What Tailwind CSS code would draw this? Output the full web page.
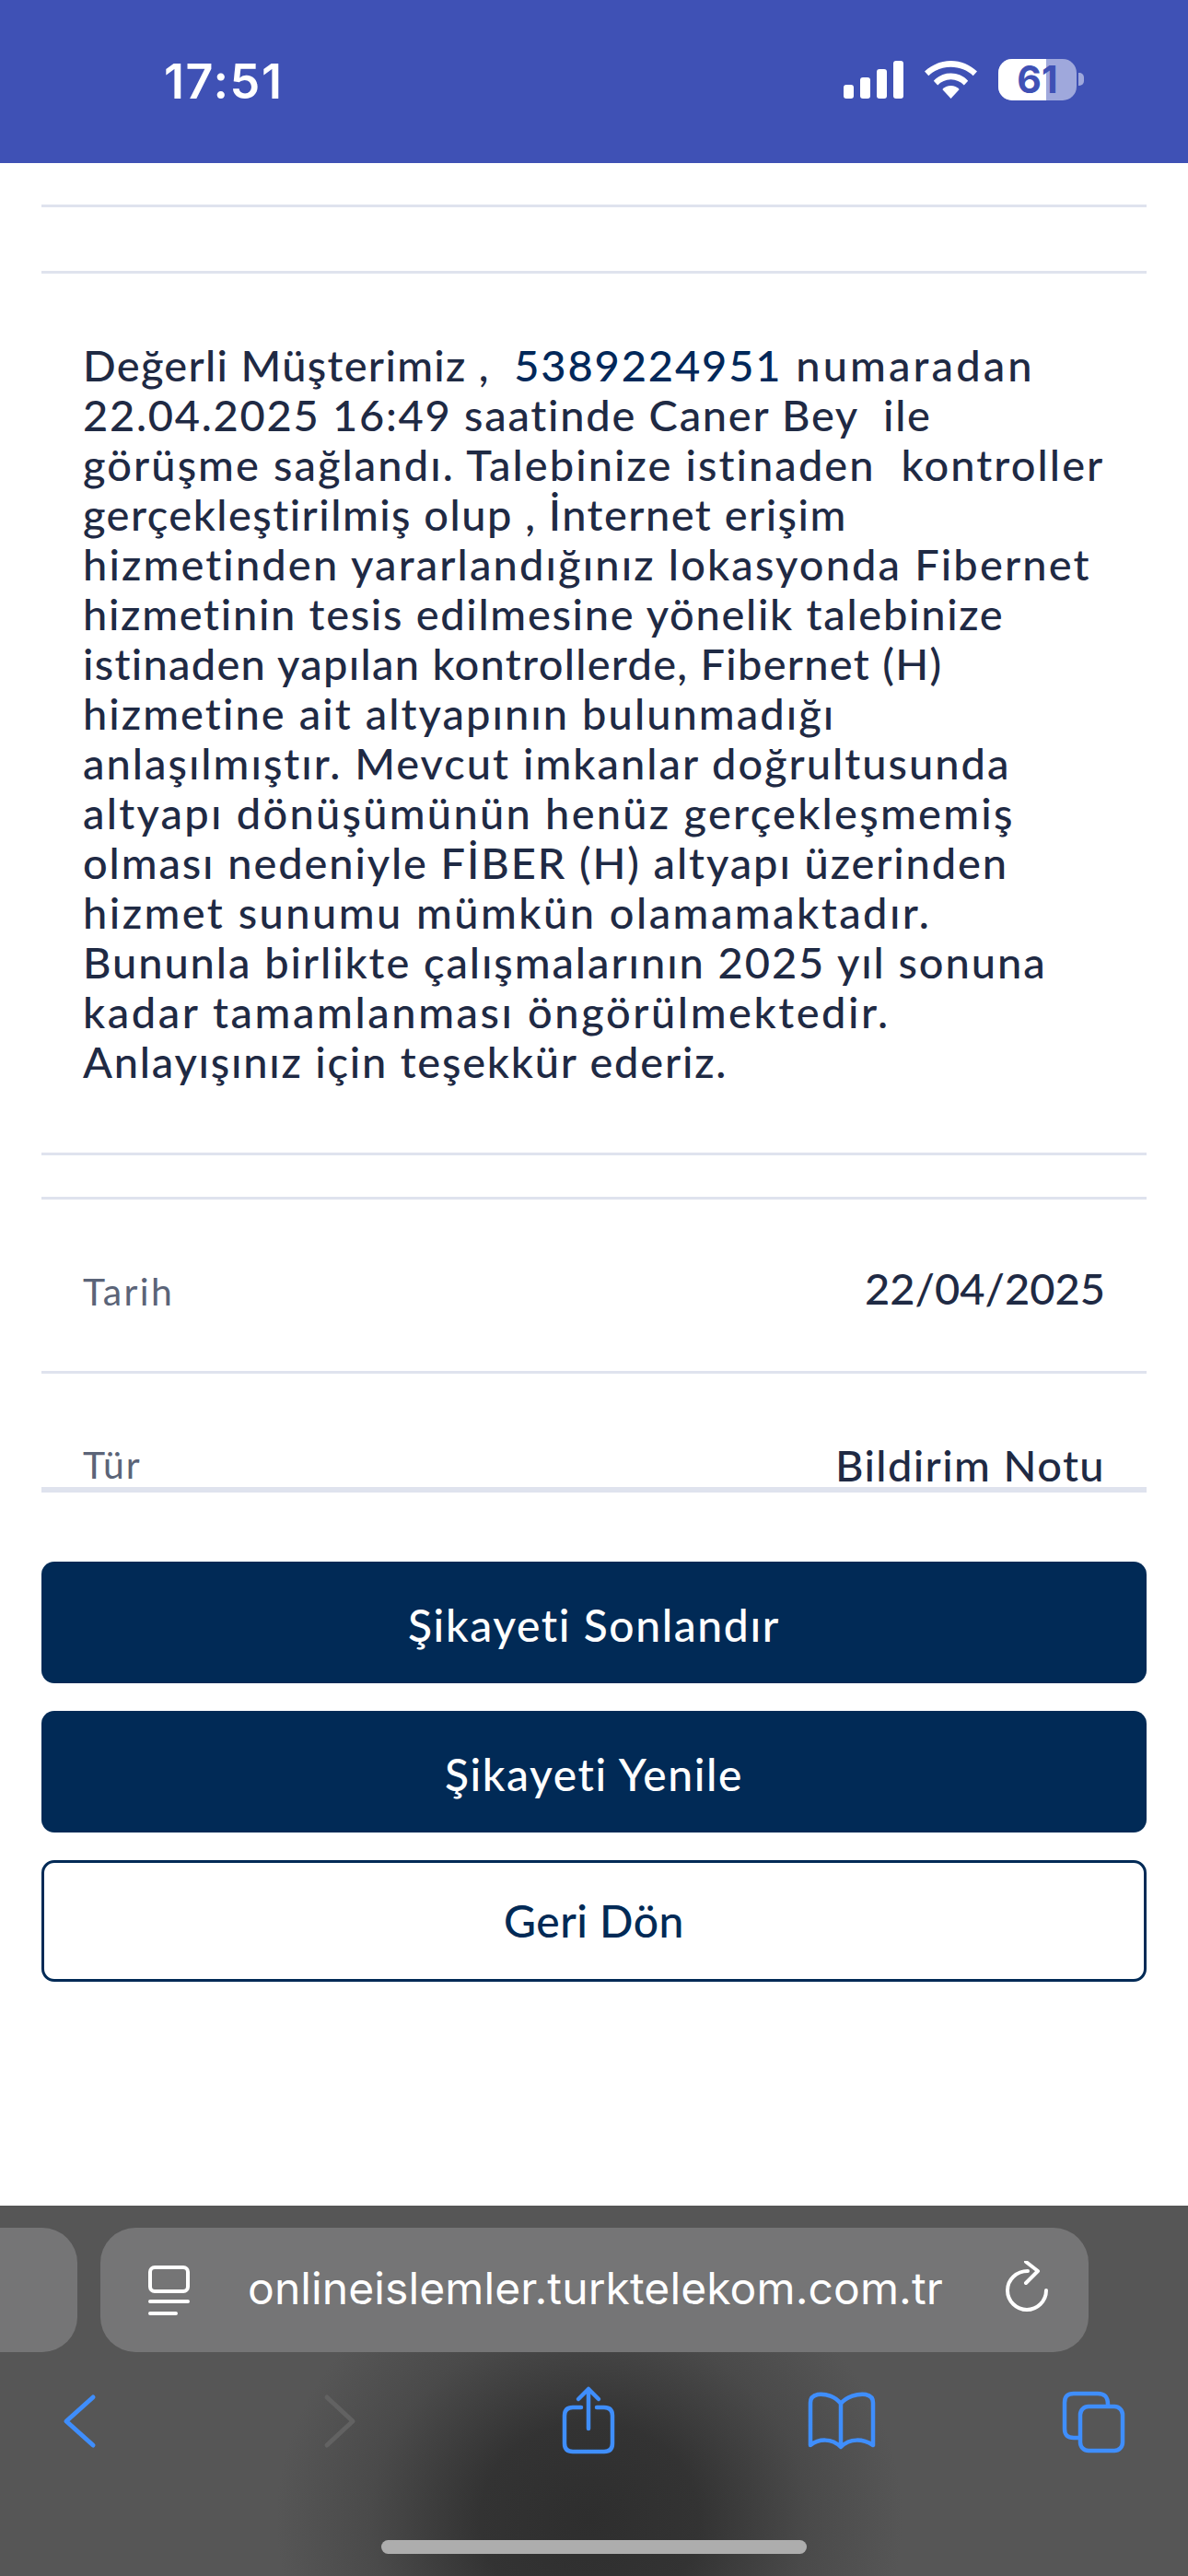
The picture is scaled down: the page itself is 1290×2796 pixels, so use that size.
<!DOCTYPE html>
<html>
<head>
<meta charset="utf-8">
<script src="https://cdn.jsdelivr.net/npm/@tailwindcss/browser@4"></script>
</head>
<body class="m-0 bg-white">
<div class="relative w-[1290px] h-[2796px] overflow-hidden bg-white font-['Lato',sans-serif]">
  <header class="relative h-[177px] bg-[#3f51b5] text-white">
    <div class="absolute left-[178px] top-[59px] font-['Inter',sans-serif] font-semibold text-[52px] leading-[60px] tracking-[1.6px]">17:51</div>
    <svg class="absolute left-[916px] top-[66px]" width="65" height="41" viewBox="0 0 65 41" fill="#fff">
      <rect x="0" y="26" width="11" height="15" rx="3"/><rect x="18" y="18" width="11" height="23" rx="3"/><rect x="36" y="9" width="11" height="32" rx="3"/><rect x="54" y="0" width="11" height="41" rx="3"/>
    </svg>
    <svg class="absolute left-[1004px] top-[66px]" width="57" height="41" viewBox="0 0 57 41" fill="#fff">
      <path d="M28.5 0C17.5 0 7.8 4.3 0 11.5L4.3 16.3C10.6 10.2 19 6.8 28.5 6.8S46.4 10.2 52.7 16.3L57 11.5C49.2 4.3 39.5 0 28.5 0Z"/>
      <path d="M28.5 13.5C21.3 13.5 14.8 16.2 9.8 21.7L14.2 26.4C18 22.6 23 20.3 28.5 20.3S39 22.6 42.8 26.4L47.2 21.7C42.2 16.2 35.7 13.5 28.5 13.5Z"/>
      <path d="M28.5 27C24.9 27 21.7 28.4 19.3 31L28.5 41L37.7 31C35.3 28.4 32.1 27 28.5 27Z"/>
    </svg>
    <div class="absolute left-[1084px] top-[64px] w-[85px] h-[45px] rounded-[15px] bg-[#9fa8dc] overflow-hidden">
      <div class="h-full w-[52px] bg-white"></div>
    </div>
    <div class="absolute left-[1171px] top-[79px] w-[6px] h-[14px] rounded-r-[5px] bg-[#9fa8dc]"></div>
    <div class="absolute left-[1084px] top-[64px] w-[85px] h-[45px] flex items-center justify-center font-['Inter',sans-serif] font-bold text-[41px] leading-[45px] text-[#3f51b5]">61</div>
  </header>

  <main class="px-[45px]">
    <div class="h-[45px]"></div>
    <div class="h-[3px] bg-[#dfe3ee]"></div>
    <div class="h-[69px]"></div>
    <div class="h-[3px] bg-[#dfe3ee]"></div>
    <div class="pl-[45px] pt-[72px] text-[47px] leading-[54px] font-medium text-[#1f2a44] h-[954px] [&>p]:whitespace-pre">
      <p><span class="tracking-[1.3px]">Değerli Müşterimiz ,  </span><span class="tracking-[1.85px] text-[#00285a]">5389224951</span><span class="tracking-[3.1px]"> numaradan</span></p>
      <p class="tracking-[1.72px]">22.04.2025 16:49 saatinde Caner Bey  ile</p>
      <p class="tracking-[2.06px]">görüşme sağlandı. Talebinize istinaden  kontroller</p>
      <p class="tracking-[1.46px]">gerçekleştirilmiş olup , İnternet erişim</p>
      <p class="tracking-[2.12px]">hizmetinden yararlandığınız lokasyonda Fibernet</p>
      <p class="tracking-[1.69px]">hizmetinin tesis edilmesine yönelik talebinize</p>
      <p class="tracking-[1.27px]">istinaden yapılan kontrollerde, Fibernet (H)</p>
      <p class="tracking-[2.05px]">hizmetine ait altyapının bulunmadığı</p>
      <p class="tracking-[2px]">anlaşılmıştır. Mevcut imkanlar doğrultusunda</p>
      <p class="tracking-[2.25px]">altyapı dönüşümünün henüz gerçekleşmemiş</p>
      <p class="tracking-[1.88px]">olması nedeniyle FİBER (H) altyapı üzerinden</p>
      <p class="tracking-[2.45px]">hizmet sunumu mümkün olamamaktadır.</p>
      <p class="tracking-[1.92px]">Bununla birlikte çalışmalarının 2025 yıl sonuna</p>
      <p class="tracking-[2.56px]">kadar tamamlanması öngörülmektedir.</p>
      <p class="tracking-[1.77px]">Anlayışınız için teşekkür ederiz.</p>
    </div>
    <div class="h-[3px] bg-[#dfe3ee]"></div>
    <div class="h-[45px]"></div>
    <div class="h-[3px] bg-[#dfe3ee]"></div>
    <div class="flex items-center justify-between h-[186px] px-[45px]">
      <span class="pt-[13px] text-[41px] tracking-[2.3px] text-[#5b6478]">Tarih</span>
      <span class="pt-[6px] text-[47px] font-medium text-[#1f2a44]">22/04/2025</span>
    </div>
    <div class="h-[3px] bg-[#dfe3ee]"></div>
    <div class="h-[129px] overflow-hidden border-b-[6px] border-[#dfe3ee] flex justify-between items-start px-[45px] pt-[75px]">
      <span class="text-[41px] leading-[48px] tracking-[2px] text-[#5b6478]">Tür</span>
      <span class="text-[47px] leading-[48px] font-medium tracking-[1.4px] text-[#1f2a44]">Bildirim Notu</span>
    </div>
    <div class="mt-[75px] flex flex-col gap-[30px]">
      <button class="h-[132px] pt-[6px] rounded-[14px] bg-[#012a56] text-white text-[48px] tracking-[1.6px] font-medium">Şikayeti Sonlandır</button>
      <button class="h-[132px] pt-[6px] rounded-[14px] bg-[#012a56] text-white text-[48px] tracking-[1.6px] font-medium">Şikayeti Yenile</button>
      <button class="h-[132px] rounded-[14px] border-[3px] border-[#012a56] bg-white text-[#012a56] text-[48px] tracking-[0.5px] font-medium">Geri Dön</button>
    </div>
  </main>

  <footer class="absolute left-0 top-[2394px] w-[1290px] h-[402px] bg-[radial-gradient(ellipse_340px_300px_at_640px_340px,#2e2e2e_0%,#333333_35%,#4a4a4a_70%,#565656_100%)]">
    <div class="absolute left-[-40px] top-[24px] w-[124px] h-[135px] rounded-[38px] bg-[#757576]"></div>
    <div class="absolute left-[109px] top-[24px] w-[1073px] h-[135px] rounded-[38px] bg-[#757576] text-white">
      <svg class="absolute left-[52px] top-[41px]" width="45" height="58" viewBox="0 0 45 58" fill="none" stroke="#fff" stroke-width="4" stroke-linecap="round">
        <rect x="2" y="2" width="41" height="26" rx="5"/><path d="M2 39H43M2 52H30"/>
      </svg>
      <div class="absolute left-[160px] top-[36px] font-['Inter',sans-serif] text-[48px] leading-[60px] tracking-[0.1px] whitespace-nowrap">onlineislemler.turktelekom.com.tr</div>
      <svg class="absolute left-[982px] top-[36px]" width="50" height="58" viewBox="0 0 50 58" fill="none" stroke="#fff" stroke-width="4" stroke-linecap="round" stroke-linejoin="round">
        <path d="M25 11C13 11 3 20 3 32S13 53 24 53 45 44 45 32"/><path d="M23 1L36 11 23 24"/>
      </svg>
    </div>
    <svg class="absolute left-0 top-0" width="1290" height="402" viewBox="0 2394 1290 402" fill="none" stroke-linecap="round" stroke-linejoin="round">
      <path d="M101 2602L72 2628 101 2654" stroke="#3f8efc" stroke-width="5"/>
      <path d="M355 2602L383 2628 355 2654" stroke="#626262" stroke-width="5"/>
      <g stroke="#3f8efc" stroke-width="4.5">
        <path d="M631 2613H622C616 2613 613 2616 613 2622V2652C613 2658 616 2661 622 2661H656C662 2661 665 2658 665 2652V2622C665 2616 662 2613 656 2613H648"/>
        <path d="M639 2636V2593M628 2604L639 2593 650 2604"/>
        <path d="M913 2609C907 2601 897 2598 888 2599 883 2600 880 2603 880 2608V2654C889 2647 903 2646 913 2656 923 2646 937 2647 948 2654V2608C948 2603 945 2600 940 2599 931 2598 919 2601 913 2609ZM913 2609V2655"/>
        <path d="M1171 2646H1166C1159 2646 1156 2643 1156 2636V2608C1156 2601 1159 2598 1166 2598H1192C1199 2598 1203 2601 1203 2610"/>
        <rect x="1173" y="2612" width="46" height="48" rx="9"/>
      </g>
    </svg>
    <div class="absolute left-[414px] top-[363px] w-[462px] h-[15px] rounded-full bg-[#adadad]"></div>
  </footer>
</div>
</body>
</html>
